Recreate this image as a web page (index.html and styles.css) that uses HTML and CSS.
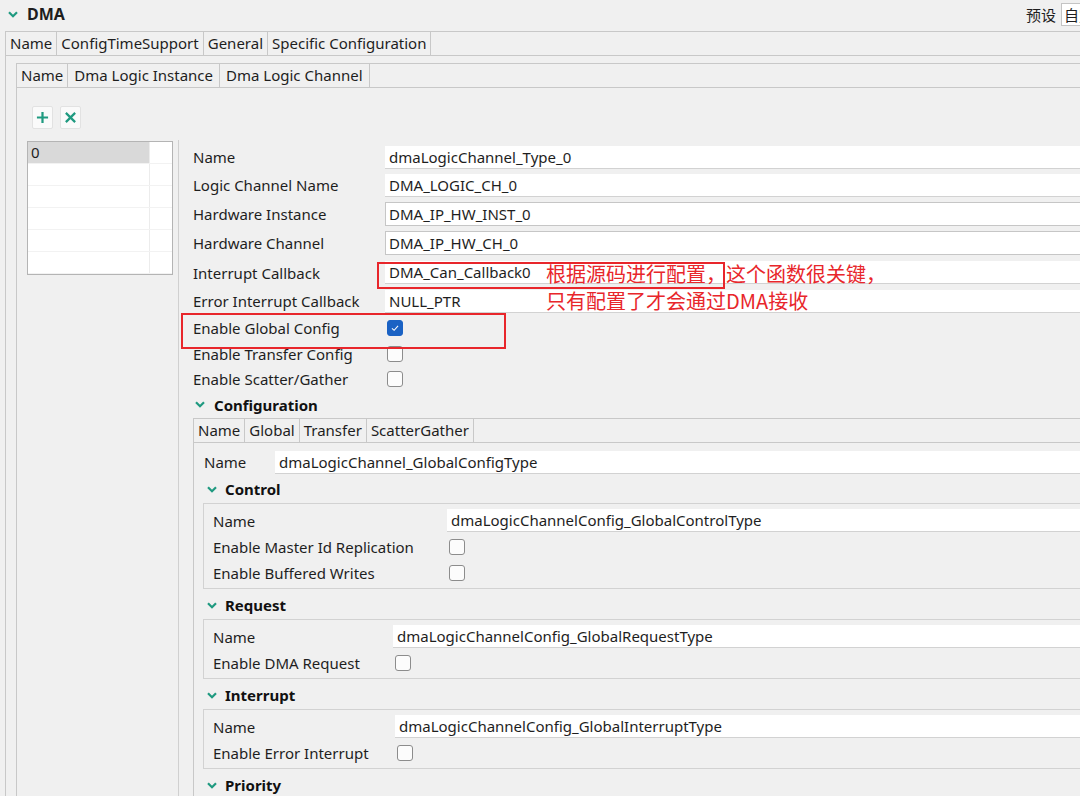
FILE: index.html
```html
<!DOCTYPE html>
<html lang="zh">
<head>
<meta charset="utf-8">
<title>DMA</title>
<link rel="stylesheet" href="styles.css">
</head>
<body>
<div class="app">
  <header class="topbar">
    <svg class="chev" viewBox="0 0 10 7"><path d="M1 1.3 L5 5.3 L9 1.3"/></svg>
    <span class="title">DMA</span>
    <span class="spacer"></span>
    <span class="preset-label">预设</span>
    <span class="preset-input">自定义</span>
  </header>

  <section class="panel panel-outer">
    <nav class="tabbar">
      <span class="tab">Name</span>
      <span class="tab">ConfigTimeSupport</span>
      <span class="tab">General</span>
      <span class="tab active">Specific Configuration</span>
    </nav>
    <div class="outer-body">
      <section class="panel panel-inner">
        <nav class="tabbar tabbar-wide">
          <span class="tab">Name</span>
          <span class="tab">Dma Logic Instance</span>
          <span class="tab active">Dma Logic Channel</span>
        </nav>
        <div class="inner-body">
          <div class="toolbar">
            <span class="tbtn"><svg viewBox="0 0 14 14"><path d="M7 1 V13 M1 7 H13"/></svg></span>
            <span class="tbtn"><svg viewBox="0 0 14 14"><path d="M2 2 L12 12 M12 2 L2 12"/></svg></span>
          </div>
          <div class="split">
            <div class="listpane">
              <div class="list">
                <div class="lrow sel"><span class="c1">0</span><span class="c2"></span></div>
                <div class="lrow"><span class="c1"></span><span class="c2"></span></div>
                <div class="lrow"><span class="c1"></span><span class="c2"></span></div>
                <div class="lrow"><span class="c1"></span><span class="c2"></span></div>
                <div class="lrow"><span class="c1"></span><span class="c2"></span></div>
                <div class="lrow"><span class="c1"></span><span class="c2"></span></div>
              </div>
            </div>
            <div class="formpane">
              <div class="form form-main">
                <span class="lbl">Name</span><span class="field">dmaLogicChannel_Type_0</span>
                <span class="lbl">Logic Channel Name</span><span class="field">DMA_LOGIC_CH_0</span>
                <span class="lbl">Hardware Instance</span><span class="field boxed">DMA_IP_HW_INST_0</span>
                <span class="lbl">Hardware Channel</span><span class="field boxed">DMA_IP_HW_CH_0</span>
                <span class="lbl">Interrupt Callback</span><span class="field">DMA_Can_Callback0</span>
                <span class="lbl">Error Interrupt Callback</span><span class="field">NULL_PTR</span>
                <span class="lbl">Enable Global Config</span><span class="cell"><span class="cb checked"><svg viewBox="0 0 16 16"><path d="M4.5 8.3 L7 10.6 L11.5 5.6"/></svg></span></span>
                <span class="lbl">Enable Transfer Config</span><span class="cell"><span class="cb"></span></span>
                <span class="lbl">Enable Scatter/Gather</span><span class="cell"><span class="cb"></span></span>
              </div>

              <div class="sect-head">
                <svg class="chev" viewBox="0 0 10 7"><path d="M1 1.3 L5 5.3 L9 1.3"/></svg>
                <span>Configuration</span>
              </div>

              <section class="panel panel-config">
                <nav class="tabbar">
                  <span class="tab">Name</span>
                  <span class="tab active">Global</span>
                  <span class="tab">Transfer</span>
                  <span class="tab">ScatterGather</span>
                </nav>
                <div class="config-body">
                  <div class="form form-global">
                    <span class="lbl">Name</span><span class="field">dmaLogicChannel_GlobalConfigType</span>
                  </div>

                  <div class="sub-head">
                    <svg class="chev" viewBox="0 0 10 7"><path d="M1 1.3 L5 5.3 L9 1.3"/></svg>
                    <span>Control</span>
                  </div>
                  <div class="box form form-control">
                    <span class="lbl">Name</span><span class="field">dmaLogicChannelConfig_GlobalControlType</span>
                    <span class="lbl">Enable Master Id Replication</span><span class="cell"><span class="cb"></span></span>
                    <span class="lbl">Enable Buffered Writes</span><span class="cell"><span class="cb"></span></span>
                  </div>

                  <div class="sub-head">
                    <svg class="chev" viewBox="0 0 10 7"><path d="M1 1.3 L5 5.3 L9 1.3"/></svg>
                    <span>Request</span>
                  </div>
                  <div class="box form form-request">
                    <span class="lbl">Name</span><span class="field">dmaLogicChannelConfig_GlobalRequestType</span>
                    <span class="lbl">Enable DMA Request</span><span class="cell"><span class="cb"></span></span>
                  </div>

                  <div class="sub-head">
                    <svg class="chev" viewBox="0 0 10 7"><path d="M1 1.3 L5 5.3 L9 1.3"/></svg>
                    <span>Interrupt</span>
                  </div>
                  <div class="box form form-interrupt">
                    <span class="lbl">Name</span><span class="field">dmaLogicChannelConfig_GlobalInterruptType</span>
                    <span class="lbl">Enable Error Interrupt</span><span class="cell"><span class="cb"></span></span>
                  </div>

                  <div class="sub-head">
                    <svg class="chev" viewBox="0 0 10 7"><path d="M1 1.3 L5 5.3 L9 1.3"/></svg>
                    <span>Priority</span>
                  </div>
                </div>
              </section>
            </div>
          </div>
        </div>
      </section>
    </div>
  </section>

  <div class="callout callout-cb"></div>
  <div class="callout callout-global"></div>
  <p class="note">根据源码进行配置，这个函数很关键，<br>只有配置了才会通过DMA接收</p>
</div>
</body>
</html>
```

FILE: styles.css
```css
* { box-sizing: border-box; }
html, body { margin: 0; padding: 0; }
body {
  width: 1080px;
  height: 796px;
  overflow: hidden;
  background: #f0f0f0;
  font-family: "Noto Sans", "Noto Sans CJK SC", sans-serif;
  font-size: 15px;
  color: #1e1e1e;
}
.app { position: relative; width: 1120px; height: 796px; }

/* top bar */
.topbar { display: flex; align-items: center; height: 28px; padding-left: 8px; }
.chev { width: 10px; height: 7px; fill: none; stroke: #1f9a80; stroke-width: 2.2; flex-shrink: 0; }
.title { font-weight: 700; font-size: 16px; margin-left: 9px; }
.spacer { flex: 1; }
.preset-label { font-family: "Noto Sans CJK SC", sans-serif; margin-right: 5px; }
.preset-input {
  width: 59px; height: 23px; background: #fff; border: 1px solid #c4c4c4;
  padding-left: 2px; line-height: 21px; white-space: nowrap; overflow: hidden;
  font-family: "Noto Sans CJK SC", sans-serif;
}

/* panels & tabs */
.panel { border-left: 1px solid #c8c8c8; }
.panel-outer { margin-top: 3px; margin-left: 5px; height: 765px; }
.tabbar {
  display: flex; height: 25px;
  border-top: 1px solid #c8c8c8; border-bottom: 1px solid #c8c8c8;
}
.tab { padding: 0 4px; line-height: 23px; border-right: 1px solid #c8c8c8; white-space: nowrap; }
.tabbar-wide .tab { padding: 0 6px; }
.tabbar-wide .tab:first-child { padding: 0 4px 0 4px; }
.outer-body { padding: 7px 0 0 10px; }
.panel-inner { height: 740px; }

.inner-body { padding-top: 18px; }
.toolbar { display: flex; gap: 7px; padding-left: 15px; height: 23px; }
.tbtn {
  width: 21px; height: 23px; background: #fafafa; border: 1px solid #e2e2e2; border-radius: 2px;
  display: flex; align-items: center; justify-content: center;
}
.tbtn svg { width: 13px; height: 13px; fill: none; stroke: #1f9a80; stroke-width: 2.4; }

.split { display: flex; margin-top: 11px; }
.listpane { width: 161px; flex-shrink: 0; padding: 1px 0 0 10px; }
.list { width: 146px; height: 134px; border: 1px solid #b4b4b4; background: #fff; overflow: hidden; }
.lrow { display: flex; height: 22px; border-bottom: 1px solid #f2f2f2; }
.c1 { width: 121px; padding-left: 3px; line-height: 21px; }
.c2 { flex: 1; border-left: 1px solid #ececec; }
.lrow.sel .c1 { background: #d9d9d9; }

.formpane { flex: 1; border-left: 1px solid #d0d0d0; padding: 3px 0 0 14px; height: 660px; }

/* forms */
.form { display: grid; align-items: center; }
.form-main {
  grid-template-columns: 192px 1fr;
  grid-template-rows: 28px 28px 29px 30px 29px 28px 26px 25px 25px;
}
.lbl { white-space: nowrap; }
.field {
  display: block; height: 23px; background: #fff; border-bottom: 1px solid #d2d2d2;
  padding-left: 4px; line-height: 22px; white-space: nowrap;
}
.field.boxed { height: 24px; border: 1px solid #c6c6c6; padding-left: 3px; }
.cell { display: flex; align-items: center; }
.cb {
  width: 16px; height: 16px; margin-left: 2px; border: 1px solid #8c8c8c; border-radius: 3px; background: #fcfcfc;
  display: flex; align-items: center; justify-content: center;
}
.cb.checked { background: #1a62c4; border-color: #1a62c4; }
.cb svg { width: 14px; height: 14px; fill: none; stroke: #fff; stroke-width: 1.2; }

.sect-head {
  display: flex; align-items: center; gap: 9px; height: 27px; padding-left: 2px;
  font-weight: 700; color: #111;
}

.config-body { padding: 6px 0 0 9px; }
.form-global { grid-template-columns: 71px 1fr; grid-template-rows: 26px; margin-left: 1px; }
.sub-head {
  display: flex; align-items: center; gap: 8px; height: 28px; padding-left: 4px;
  font-weight: 700; color: #111;
}
.box {
  border: 1px solid #d2d2d2; border-right: none; margin-bottom: 2px;
  padding: 3px 0 2px 9px;
}
.form-control { grid-template-columns: 234px 1fr; grid-template-rows: 27px 26px 26px; }
.form-request { grid-template-columns: 180px 1fr; grid-template-rows: 27px 26px; }
.form-interrupt { grid-template-columns: 182px 1fr; grid-template-rows: 27px 26px; }

/* annotations */
.callout { position: absolute; border: 2px solid #e8262b; }
.callout-cb { left: 377px; top: 262px; width: 348px; height: 27px; }
.callout-global { left: 181px; top: 313px; width: 325px; height: 36px; }
.note {
  position: absolute; left: 546px; top: 260px; margin: 0;
  font-family: "Noto Sans CJK SC", sans-serif; font-size: 20px; line-height: 27px;
  color: #e8262b; white-space: nowrap;
}
```
